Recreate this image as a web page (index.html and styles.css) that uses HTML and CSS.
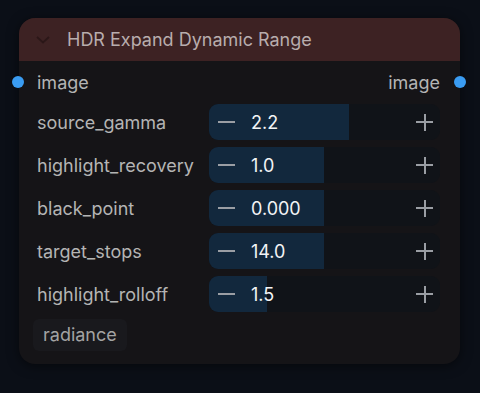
FILE: index.html
```html
<!DOCTYPE html>
<html>
<head>
<title>HDR Expand Dynamic Range</title>
<link rel="stylesheet" href="styles.css">
</head>
<body>
<div class="node">
  <div class="node-head">
    <svg class="chev" width="14" height="8" viewBox="0 0 14 8"><path d="M1 1 L7 6.5 L13 1" fill="none" stroke="#2b1718" stroke-width="1.8"/></svg>
    <span class="title">HDR Expand Dynamic Range</span>
  </div>
  <div class="node-body">
    <div class="io">
      <span class="dot dot-in"></span>
      <span>image</span>
      <span>image</span>
      <span class="dot dot-out"></span>
    </div>
    <div class="row">
      <span class="label">source_gamma</span>
      <div class="slider"><div class="fill" style="width:60.6%"></div><span class="minus"></span><span class="val">2.2</span><span class="plus"></span></div>
    </div>
    <div class="row">
      <span class="label">highlight_recovery</span>
      <div class="slider"><div class="fill" style="width:49.8%"></div><span class="minus"></span><span class="val">1.0</span><span class="plus"></span></div>
    </div>
    <div class="row">
      <span class="label">black_point</span>
      <div class="slider"><div class="fill" style="width:49.8%"></div><span class="minus"></span><span class="val">0.000</span><span class="plus"></span></div>
    </div>
    <div class="row">
      <span class="label">target_stops</span>
      <div class="slider"><div class="fill" style="width:49.8%"></div><span class="minus"></span><span class="val">14.0</span><span class="plus"></span></div>
    </div>
    <div class="row">
      <span class="label">highlight_rolloff</span>
      <div class="slider"><div class="fill" style="width:25.1%"></div><span class="minus"></span><span class="val">1.5</span><span class="plus"></span></div>
    </div>
    <div class="tags"><span class="tag">radiance</span></div>
  </div>
</div>
</body>
</html>
```
FILE: styles.css
```css
html, body { margin: 0; height: 100%; }
body {
  background: #0b0f17;
  font-family: Inter, "Noto Sans", sans-serif;
  font-size: 18px;
  padding: 18px 20px 0 19px;
  box-sizing: border-box;
}
.node {
  width: 441px;
  background: #151417;
  border-radius: 16px;
  box-shadow: 0 2px 12px rgba(0,0,0,0.5);
  position: relative;
}
.node-head {
  height: 43px;
  background: #3d2223;
  border-radius: 16px 16px 0 0;
  display: flex;
  align-items: center;
}
.chev { margin-left: 17px; margin-right: 17px; margin-top: 1px; }
.title { color: #b8adad; }
.node-body {
  padding: 3px 20px 13px 18px;
  display: flex;
  flex-direction: column;
  gap: 7px;
}
.io, .row {
  height: 36px;
  display: flex;
  align-items: center;
  justify-content: space-between;
  color: #b4b4b4;
}
.io { position: relative; margin-bottom: -3px; }
.dot {
  position: absolute;
  width: 12px;
  height: 12px;
  border-radius: 50%;
  background: #3a9cf2;
  top: 12px;
}
.dot-in { left: -25px; }
.dot-out { right: -26px; }
.label { color: #b4b4b4; }
.slider {
  width: 231px;
  height: 36px;
  background: #101318;
  border-radius: 9px;
  position: relative;
  display: flex;
  align-items: center;
  overflow: hidden;
}
.fill {
  position: absolute;
  left: 0;
  top: 0;
  bottom: 0;
  background: #12283d;
}
.minus, .plus, .val { position: relative; }
.minus {
  width: 17px;
  height: 2px;
  background: #9a9ea4;
  margin-left: 9px;
}
.val { color: #f2f4f6; margin-left: 16px; flex: 1; }
.plus {
  width: 17px;
  height: 17px;
  margin-right: 7px;
  background:
    linear-gradient(#9a9ea4, #9a9ea4) center / 17px 2px no-repeat,
    linear-gradient(#9a9ea4, #9a9ea4) center / 2px 17px no-repeat;
}
.tags { display: flex; margin-left: -4px; }
.tag {
  background: #19191d;
  color: #a3a3a3;
  border-radius: 6px;
  padding: 0 10px;
  height: 32px;
  line-height: 32px;
}
```
